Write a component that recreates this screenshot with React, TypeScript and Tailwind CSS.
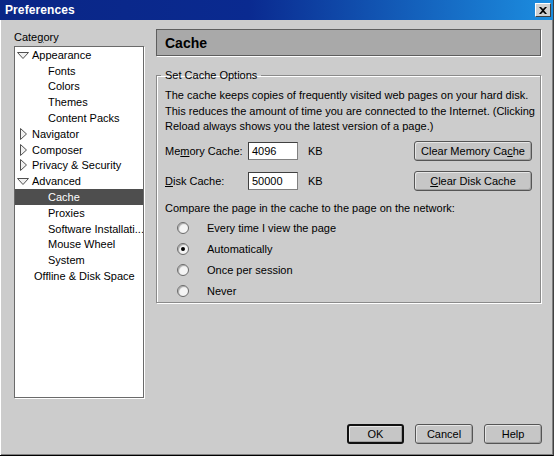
import React from "react";

type Node = { label: string; level: number; twisty?: "open" | "closed"; selected?: boolean; pad?: number };

const tree: Node[] = [
  { label: "Appearance", level: 1, twisty: "open" },
  { label: "Fonts", level: 2 },
  { label: "Colors", level: 2 },
  { label: "Themes", level: 2 },
  { label: "Content Packs", level: 2 },
  { label: "Navigator", level: 1, twisty: "closed" },
  { label: "Composer", level: 1, twisty: "closed" },
  { label: "Privacy & Security", level: 1, twisty: "closed" },
  { label: "Advanced", level: 1, twisty: "open" },
  { label: "Cache", level: 2, selected: true },
  { label: "Proxies", level: 2 },
  { label: "Software Installati...", level: 2 },
  { label: "Mouse Wheel", level: 2 },
  { label: "System", level: 2 },
  { label: "Offline & Disk Space", level: 1, pad: 19 },
];

function Twisty({ open }: { open: boolean }) {
  return (
    <svg width="12" height="12" viewBox="0 0 12 12" className="shrink-0">
      {open ? (
        <polygon points="0.5,3.5 11.5,3.5 6,9.5" fill="#f0f0f0" stroke="#505050" strokeWidth="1" />
      ) : (
        <polygon points="3.5,0.5 3.5,11.5 9.5,6" fill="#f0f0f0" stroke="#505050" strokeWidth="1" />
      )}
    </svg>
  );
}

function Radio({ checked, label }: { checked?: boolean; label: string }) {
  return (
    <div className="flex items-center h-[21px]">
      <div className="ml-[12px] w-[12px] h-[12px] rounded-full border border-[#6a6a6a] bg-[#f4f4f4] shadow-[inset_1px_1px_1px_#a8a8a8] flex items-center justify-center">
        {checked && <div className="w-[4px] h-[4px] rounded-full bg-black" />}
      </div>
      <span className="ml-[18px]">{label}</span>
    </div>
  );
}

function Btn({ children, className = "" }: { children: React.ReactNode; className?: string }) {
  return (
    <div
      className={
        "flex items-center justify-center rounded-[3px] bg-[#c6c6c6] shadow-[inset_1px_1px_0_#e6e6e6,inset_-1px_-1px_0_#a0a0a0] " +
        className
      }
    >
      {children}
    </div>
  );
}

export default function App() {
  return (
    <div className="w-[554px] h-[456px] bg-[#cccccc] flex flex-col border-r border-b border-r-[#404040] border-b-black shadow-[inset_1px_0_0_#fff,inset_-1px_-1px_0_#808080] font-['Liberation_Sans',Arial,sans-serif] text-[11px] text-black leading-[14px]">
      {/* Title bar */}
      <div className="h-[20px] flex items-center justify-between pl-[5px] pr-[2px] bg-[linear-gradient(to_right,#0a2686_0%,#0a2a90_45%,#1c8ee0_100%)]">
        <span className="text-white font-bold text-[12px] tracking-[0.1px]">Preferences</span>
        <div className="w-[16px] h-[14px] bg-[#d0d0d0] border border-t-white border-l-white border-r-[#404040] border-b-[#404040] flex items-center justify-center">
          <svg width="8" height="7" viewBox="0 0 8 7">
            <path d="M0 0 L2 0 L4 2 L6 0 L8 0 L5 3.5 L8 7 L6 7 L4 5 L2 7 L0 7 L3 3.5 Z" fill="#000" />
          </svg>
        </div>
      </div>

      {/* Main */}
      <div className="flex-1 flex pl-[14px] pr-[11px] pt-[9px]">
        {/* Left column */}
        <div className="w-[130px] flex flex-col">
          <div className="mt-[1px] mb-[2px] leading-[14px]">
            Cate<span className="underline">g</span>ory
          </div>
          <div className="h-[352px] bg-white border border-[#6a6a6a] shadow-[1px_1px_0_#fff] overflow-hidden">
            {tree.map((n, i) => (
              <div
                key={i}
                className={
                  "h-[15.8px] flex items-center whitespace-nowrap " +
                  (n.selected ? "bg-[#4e4e4e] text-white" : "")
                }
              >
                {n.twisty ? (
                  <div className="flex items-center pl-[2px]">
                    <Twisty open={n.twisty === "open"} />
                    <span className="ml-[3px]">{n.label}</span>
                  </div>
                ) : (
                  <span style={{ paddingLeft: n.pad ?? (n.level === 2 ? 33 : 19) }}>{n.label}</span>
                )}
              </div>
            ))}
          </div>
        </div>

        {/* Right column */}
        <div className="ml-[12px] w-[385px] flex flex-col">
          <div className="h-[27px] bg-[#a9a9a9] border border-[#5e5e5e] shadow-[1px_1px_0_#fff] flex items-center pl-[8px]">
            <span className="font-bold text-[14px]">Cache</span>
          </div>

          <fieldset className="mt-[13px] min-w-0 w-full border border-[#8a8a8a] shadow-[inset_1px_1px_0_#fff,1px_1px_0_#fff] px-[8px] pb-[2px] h-[234px]">
            <legend className="px-[4px] -ml-[4px] leading-[13px]">Set Cache Options</legend>
            <div className="mt-[6px] leading-[15.5px] whitespace-nowrap">
              The cache keeps copies of frequently visited web pages on your hard disk.
              <br />
              This reduces the amount of time you are connected to the Internet. (Clicking
              <br />
              Reload always shows you the latest version of a page.)
            </div>

            <div className="mt-[6px] flex items-center h-[20px]">
              <span className="w-[83px]">
                Me<span className="underline">m</span>ory Cache:
              </span>
              <div className="w-[50px] h-[18px] bg-white border border-[#404040] border-r-[#808080] border-b-[#808080] pl-[3px] flex items-center">
                4096
              </div>
              <span className="ml-[10px]">KB</span>
              <Btn className="ml-auto w-[118px] h-[20px] border border-[#555]">
                Clear Memory Ca<span className="underline">c</span>he
              </Btn>
            </div>

            <div className="mt-[10px] flex items-center h-[20px]">
              <span className="w-[83px]">
                <span className="underline">D</span>isk Cache:
              </span>
              <div className="w-[50px] h-[18px] bg-white border border-[#404040] border-r-[#808080] border-b-[#808080] pl-[3px] flex items-center">
                50000
              </div>
              <span className="ml-[10px]">KB</span>
              <Btn className="ml-auto w-[118px] h-[20px] border border-[#555]">
                <span className="underline">C</span>lear Disk Cache
              </Btn>
            </div>

            <div className="mt-[10px] leading-[15px] whitespace-nowrap">Compare the page in the cache to the page on the network:</div>
            <div className="mt-[2px]">
              <Radio label="Every time I view the page" />
              <Radio label="Automatically" checked />
              <Radio label="Once per session" />
              <Radio label="Never" />
            </div>
          </fieldset>
        </div>
      </div>

      {/* Bottom buttons */}
      <div className="flex justify-end gap-[11px] pr-[11px] mb-[11px] h-[20px]">
        <Btn className="w-[57px] h-[20px] border-2 border-[#111]">OK</Btn>
        <Btn className="w-[58px] h-[20px] border border-[#555]">Cancel</Btn>
        <Btn className="w-[58px] h-[20px] border border-[#555]">Help</Btn>
      </div>
    </div>
  );
}
